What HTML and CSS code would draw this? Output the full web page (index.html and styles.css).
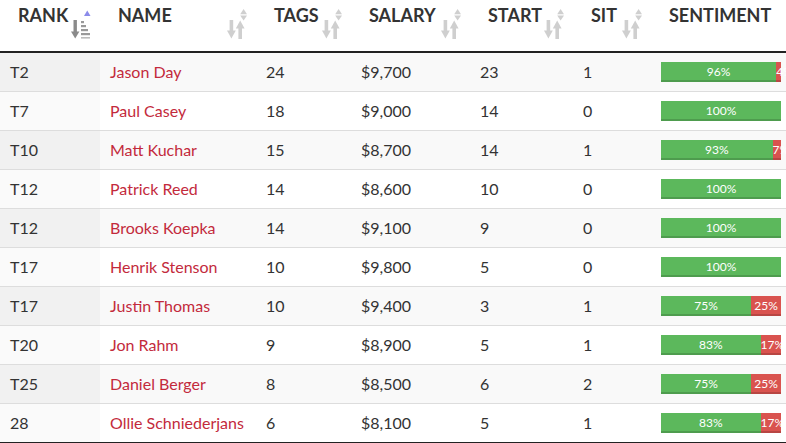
FILE: index.html
```html
<!DOCTYPE html>
<html>
<head>
<meta charset="utf-8">
<link rel="stylesheet" href="styles.css">
</head>
<body>
<table class="grid">
  <colgroup>
    <col class="c-rank"><col class="c-name"><col class="c-tags"><col class="c-salary"><col class="c-start"><col class="c-sit"><col class="c-sent">
  </colgroup>
  <thead>
    <tr>
      <th><div class="th-in"><span>RANK</span>
        <svg class="sort" width="20" height="30" viewBox="0 0 20 30"><polygon points="13,7 19.5,7 16.25,1.5" fill="#8b8bea"/><rect x="2.5" y="11" width="3.4" height="14" fill="#8a8a8a"/><polygon points="0,22.5 8.4,22.5 4.2,29.5" fill="#8a8a8a"/><rect x="10" y="12" width="3" height="2.2" fill="#999"/><rect x="10" y="16" width="5" height="2.2" fill="#999"/><rect x="10" y="20" width="7" height="2.2" fill="#999"/><rect x="10" y="24" width="9" height="2.2" fill="#999"/><rect x="10" y="28" width="9" height="1.6" fill="#bbb"/></svg>
      </div></th>
      <th><div class="th-in"><span>NAME</span><svg class="sort" width="20" height="30" viewBox="0 0 20 30"><use href="#unsorted"/></svg></div></th>
      <th><div class="th-in"><span>TAGS</span><svg class="sort" width="20" height="30" viewBox="0 0 20 30"><use href="#unsorted"/></svg></div></th>
      <th><div class="th-in"><span>SALARY</span><svg class="sort" width="20" height="30" viewBox="0 0 20 30"><use href="#unsorted"/></svg></div></th>
      <th><div class="th-in"><span>START</span><svg class="sort" width="20" height="30" viewBox="0 0 20 30"><use href="#unsorted"/></svg></div></th>
      <th><div class="th-in"><span>SIT</span><svg class="sort" width="20" height="30" viewBox="0 0 20 30"><use href="#unsorted"/></svg></div></th>
      <th><div class="th-in"><span>SENTIMENT</span></div></th>
    </tr>
  </thead>
  <tbody>
    <tr><td>T2</td><td class="name">Jason Day</td><td>24</td><td>$9,700</td><td>23</td><td>1</td><td><div class="bar"><div class="pos" style="width:96%">96%</div><div class="neg" style="width:4%">4%</div></div></td></tr>
    <tr><td>T7</td><td class="name">Paul Casey</td><td>18</td><td>$9,000</td><td>14</td><td>0</td><td><div class="bar"><div class="pos" style="width:100%">100%</div></div></td></tr>
    <tr><td>T10</td><td class="name">Matt Kuchar</td><td>15</td><td>$8,700</td><td>14</td><td>1</td><td><div class="bar"><div class="pos" style="width:93%">93%</div><div class="neg" style="width:7%">7%</div></div></td></tr>
    <tr><td>T12</td><td class="name">Patrick Reed</td><td>14</td><td>$8,600</td><td>10</td><td>0</td><td><div class="bar"><div class="pos" style="width:100%">100%</div></div></td></tr>
    <tr><td>T12</td><td class="name">Brooks Koepka</td><td>14</td><td>$9,100</td><td>9</td><td>0</td><td><div class="bar"><div class="pos" style="width:100%">100%</div></div></td></tr>
    <tr><td>T17</td><td class="name">Henrik Stenson</td><td>10</td><td>$9,800</td><td>5</td><td>0</td><td><div class="bar"><div class="pos" style="width:100%">100%</div></div></td></tr>
    <tr><td>T17</td><td class="name">Justin Thomas</td><td>10</td><td>$9,400</td><td>3</td><td>1</td><td><div class="bar"><div class="pos" style="width:75%">75%</div><div class="neg" style="width:25%">25%</div></div></td></tr>
    <tr><td>T20</td><td class="name">Jon Rahm</td><td>9</td><td>$8,900</td><td>5</td><td>1</td><td><div class="bar"><div class="pos" style="width:83%">83%</div><div class="neg" style="width:17%">17%</div></div></td></tr>
    <tr><td>T25</td><td class="name">Daniel Berger</td><td>8</td><td>$8,500</td><td>6</td><td>2</td><td><div class="bar"><div class="pos" style="width:75%">75%</div><div class="neg" style="width:25%">25%</div></div></td></tr>
    <tr><td>28</td><td class="name">Ollie Schniederjans</td><td>6</td><td>$8,100</td><td>5</td><td>1</td><td><div class="bar"><div class="pos" style="width:83%">83%</div><div class="neg" style="width:17%">17%</div></div></td></tr>
  </tbody>
</table>
<svg class="defs" width="0" height="0">
  <defs>
    <g id="unsorted" fill="#cfcfcf">
      <polygon points="13.2,5.2 20,5.2 16.6,0"/>
      <polygon points="13.2,6.6 20,6.6 16.6,11.5"/>
      <rect x="2.6" y="11" width="3.6" height="13"/>
      <polygon points="0,21.5 8.8,21.5 4.4,29.5"/>
      <rect x="11.4" y="17" width="3.6" height="13"/>
      <polygon points="8.8,19.5 17.6,19.5 13.2,11.5"/>
    </g>
  </defs>
</svg>
</body>
</html>
```

FILE: styles.css
```css
html, body {
  margin: 0;
  padding: 0;
  background: #fff;
}

body {
  font-family: Lato, "Open Sans", sans-serif;
  color: #333;
  width: 786px;
  height: 443px;
  overflow: hidden;
}

.defs {
  position: absolute;
  width: 0;
  height: 0;
}

.grid {
  border-collapse: collapse;
  table-layout: fixed;
  width: 786px;
  border-bottom: 2px solid #222;
}

.c-rank { width: 100px; }
.c-name { width: 156px; }
.c-tags { width: 95px; }
.c-salary { width: 119px; }
.c-start { width: 103px; }
.c-sit { width: 78px; }
.c-sent { width: 135px; }

.grid th {
  height: 51px;
  padding: 0 9px 0 18px;
  text-align: left;
  vertical-align: top;
  font-weight: 700;
  font-size: 18px;
  color: #333;
  border-bottom: 2px solid #222;
}

.th-in {
  display: flex;
  justify-content: space-between;
  align-items: flex-start;
  padding-top: 4px;
}

.th-in span {
  line-height: 22px;
}

.sort {
  display: block;
  margin-top: 5px;
  flex: none;
}

.grid td {
  height: 38px;
  padding: 0 10px;
  font-size: 16px;
  line-height: 20px;
  border-top: 1px solid #ddd;
  vertical-align: middle;
  white-space: nowrap;
}

.grid tbody tr:first-child td {
  border-top: none;
}

.grid tbody tr:nth-child(odd) td {
  background: #f9f9f9;
}

.grid tbody tr:nth-child(odd) td:first-child {
  background: #f1f1f1;
}

.grid tbody tr:nth-child(even) td:first-child {
  background: #fafafa;
}

.grid td.name {
  color: #c32a3c;
}

.bar {
  display: flex;
  width: 120px;
  height: 20px;
}

.pos, .neg {
  height: 20px;
  font-size: 12px;
  font-weight: 400;
  line-height: 20px;
  color: #fff;
  text-align: center;
  white-space: nowrap;
  box-shadow: inset 0 -2px 0 rgba(0, 0, 0, 0.15);
}

.pos {
  background: #5cb85c;
}

.neg {
  background: #d9534f;
}
```
